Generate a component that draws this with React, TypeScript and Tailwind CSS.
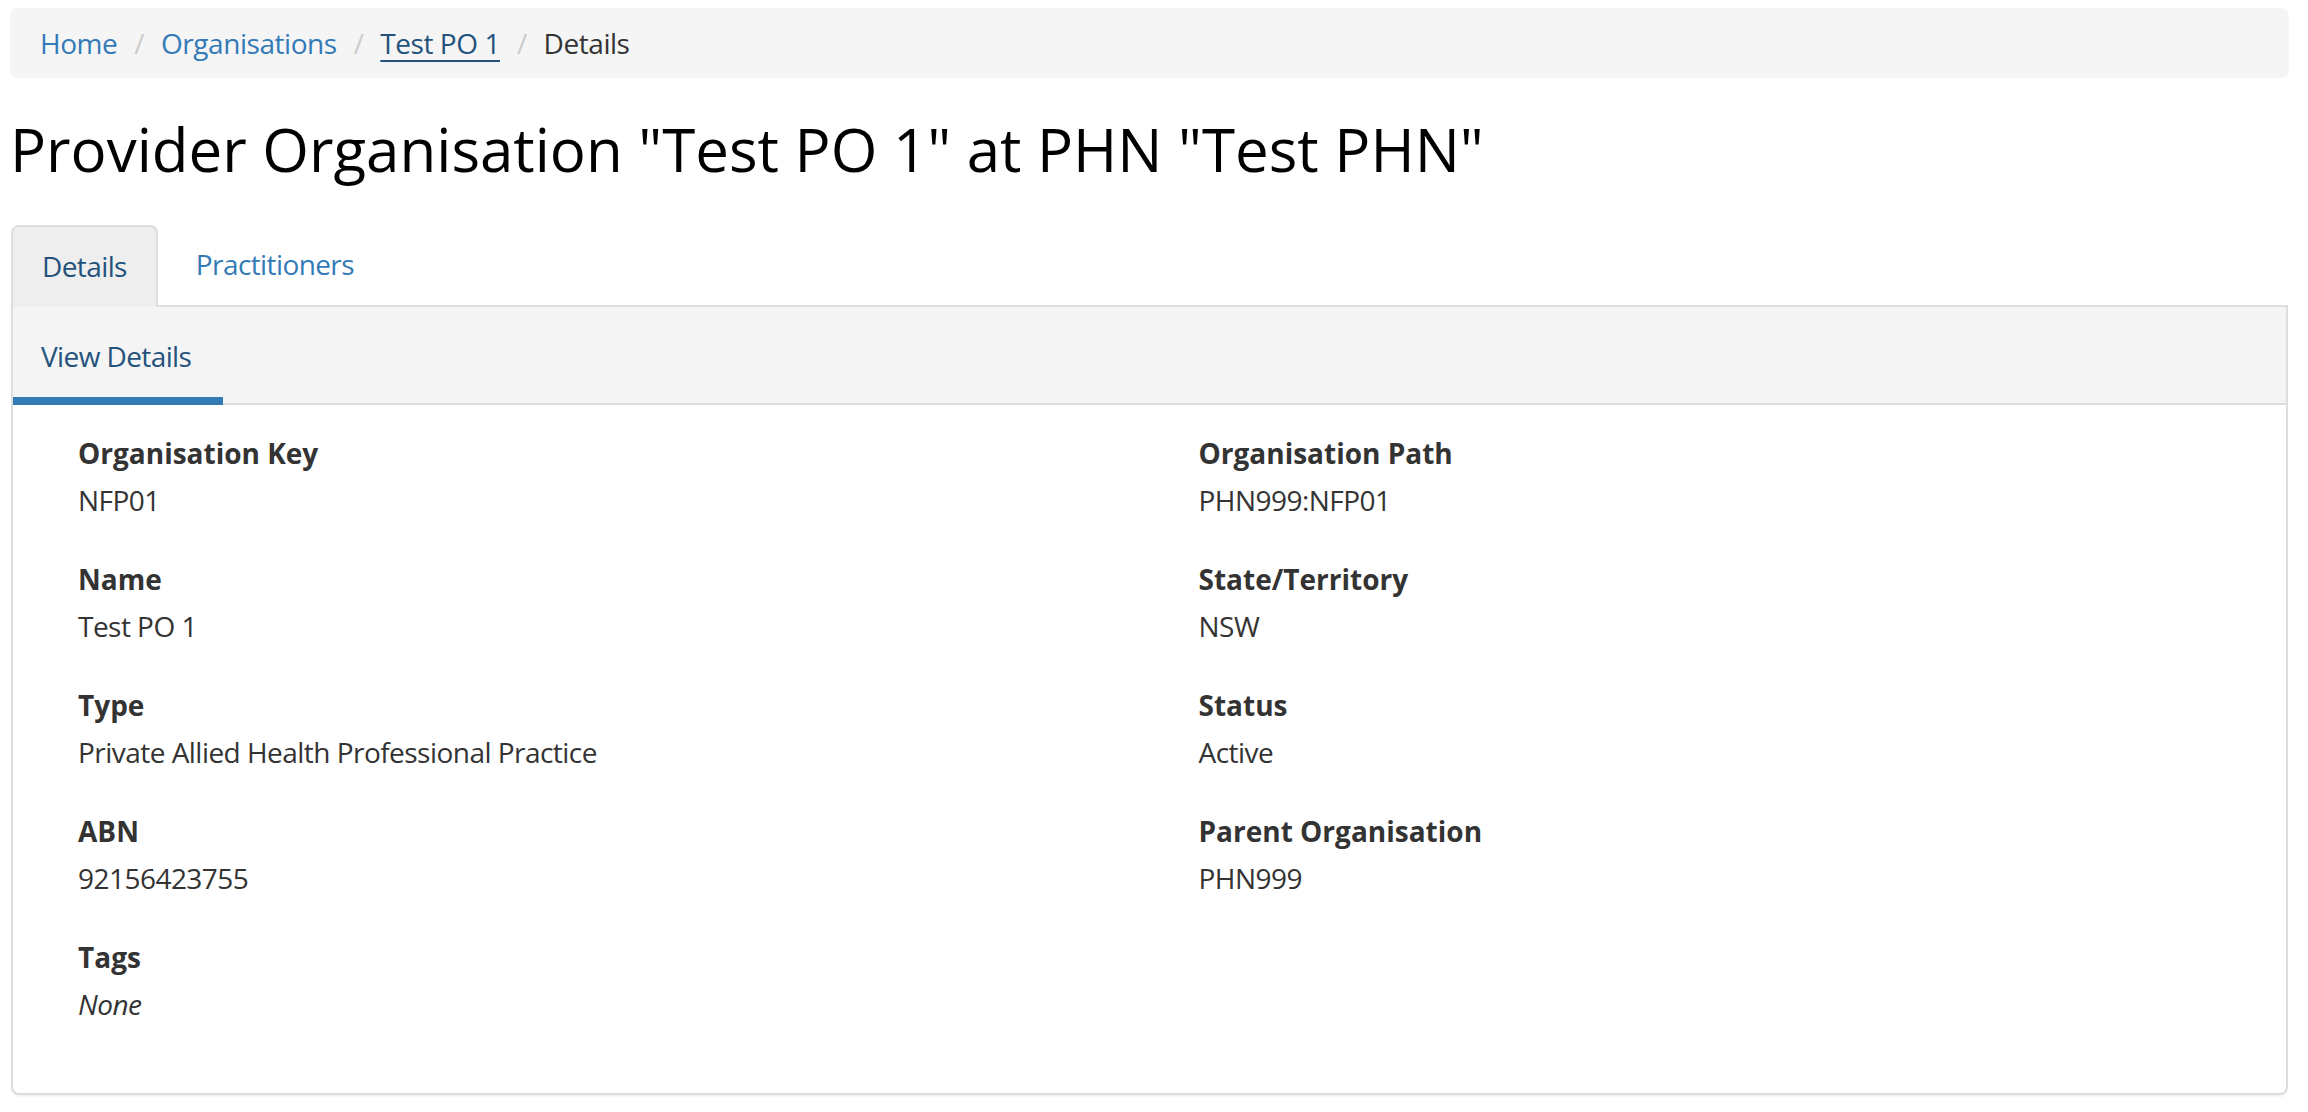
const font = { fontFamily: '"Open Sans", "Liberation Sans", sans-serif' };

type Field = { label: string; value: string; italic?: boolean };

const leftFields: Field[] = [
  { label: 'Organisation Key', value: 'NFP01' },
  { label: 'Name', value: 'Test PO 1' },
  { label: 'Type', value: 'Private Allied Health Professional Practice' },
  { label: 'ABN', value: '92156423755' },
  { label: 'Tags', value: 'None', italic: true },
];

const rightFields: Field[] = [
  { label: 'Organisation Path', value: 'PHN999:NFP01' },
  { label: 'State/Territory', value: 'NSW' },
  { label: 'Status', value: 'Active' },
  { label: 'Parent Organisation', value: 'PHN999' },
];

const Separator = () => (
  <span className="ml-[7px] px-[10px] text-[#ccc]">/{'\u00a0'}</span>
);

const FieldList = ({ fields }: { fields: Field[] }) => (
  <div className="flex flex-col gap-[37px] pl-[49px]">
    {fields.map((f) => (
      <div key={f.label}>
        <div className="text-[28px] font-bold leading-[40px] text-[#333]">{f.label}</div>
        <div
          className={`mt-[7px] pb-[2px] text-[28px] leading-[40px] tracking-[-0.53px] text-[#333] ${
            f.italic ? 'italic' : ''
          }`}
        >
          {f.value}
        </div>
      </div>
    ))}
  </div>
);

export default function App() {
  return (
    <div className="min-h-screen bg-white pl-[10px] pr-[19px] pt-[8px]" style={font}>
      {/* Breadcrumb */}
      <nav className="flex h-[70px] items-center rounded-[8px] bg-[#f5f5f5] px-[30px] text-[28px] leading-[40px] tracking-[-0.45px]">
        <a className="text-[#337ab7]">Home</a>
        <Separator />
        <a className="text-[#337ab7]">Organisations</a>
        <Separator />
        <a className="text-[#23527c] underline decoration-2 underline-offset-[6px]">Test PO 1</a>
        <Separator />
        <span className="text-[#333]">Details</span>
      </nav>

      <h1 className="mt-[38px] mb-[41px] text-[60px] font-normal leading-[1.1] text-black">
        Provider Organisation "Test PO 1" at PHN "Test PHN"
      </h1>

      <div className="mx-[1px]">
        {/* Tabs */}
        <div className="flex items-end text-[28px] leading-[40px] tracking-[-0.6px]">
          <div className="relative z-10 -mb-[2px] rounded-t-[8px] border-2 border-b-0 border-[#ddd] bg-[#eee] px-[29px] pt-[19px] pb-[21px] text-[#23527c]">
            Details
          </div>
          <div className="ml-[7px] border-2 border-transparent px-[29px] pt-[19px] pb-[19px] text-[#337ab7]">
            Practitioners
          </div>
        </div>

        {/* Panel */}
        <div className="rounded-b-[8px] border-2 border-[#ddd] bg-white shadow-[0_2px_2px_rgba(0,0,0,0.05)]">
          <div className="flex border-b-2 border-[#ddd] bg-[#f4f4f4]">
            <div className="-mb-[2px] flex h-[98px] w-[210px] shrink-0 items-center whitespace-nowrap border-b-[8px] border-[#337ab7] px-[28px] pt-[8px] text-[28px] leading-[40px] tracking-[-0.6px] text-[#23527c]">
              View Details
            </div>
          </div>

          <div className="grid grid-cols-2 px-[16px] pt-[28px] pb-[67px]">
            <FieldList fields={leftFields} />
            <FieldList fields={rightFields} />
          </div>
        </div>
      </div>
    </div>
  );
}
